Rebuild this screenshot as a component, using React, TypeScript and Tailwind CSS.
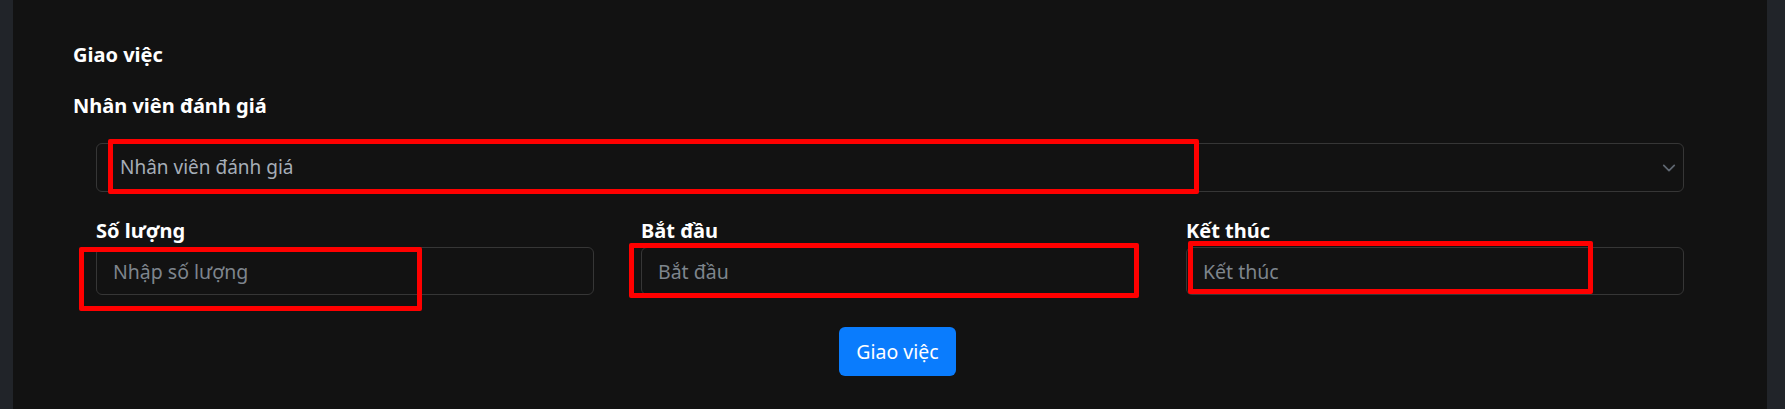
import React from "react";

const font = { fontFamily: '"Noto Sans", "Open Sans", sans-serif' };

function Field({ label, placeholder }: { label: string; placeholder: string }) {
  return (
    <div className="flex flex-col">
      <label className="text-[20px] font-bold leading-[29px] text-white">{label}</label>
      <input
        placeholder={placeholder}
        className="mt-[2px] h-[48px] w-full rounded-[6px] border border-[#363636] bg-[#121212] pl-[16px] text-[19.5px] leading-[29px] text-white outline-none placeholder:text-[#7e858d]"
      />
    </div>
  );
}

export default function App() {
  return (
    <div className="relative flex h-[409px] overflow-hidden bg-[#212429] pl-[13px] pr-[18px]" style={font}>
      <div className="flex-1 bg-[#121212] px-[60px] pt-[40px]">
        <h5 className="text-[20px] font-bold leading-[29px] text-white">Giao việc</h5>
        <div className="mt-[22px] text-[20px] font-bold leading-[29px] text-white">Nhân viên đánh giá</div>

        <div className="mx-[23px]">
          {/* select */}
          <div className="mt-[23px] flex h-[49px] items-center justify-between rounded-[6px] border border-[#363636] pl-[23px] pr-[7px]">
            <span className="text-[19px] leading-[29px] text-[#a6aeb8]">Nhân viên đánh giá</span>
            <svg width="14" height="14" viewBox="0 0 16 16" fill="none">
              <path d="m2 5 6 6 6-6" stroke="#5f6771" strokeWidth="2" strokeLinecap="round" strokeLinejoin="round" />
            </svg>
          </div>

          <div className="mt-[24px] grid grid-cols-3 gap-x-[47px]">
            <Field label="Số lượng" placeholder="Nhập số lượng" />
            <Field label="Bắt đầu" placeholder="Bắt đầu" />
            <Field label="Kết thúc" placeholder="Kết thúc" />
          </div>

          <div className="mt-[32px] flex justify-center pl-[15px]">
            <button className="h-[49px] w-[117px] rounded-[6px] bg-[#0a7cfd] text-[19.5px] leading-[29px] text-white">
              Giao việc
            </button>
          </div>
        </div>
      </div>

      {/* red annotation boxes */}
      <div className="pointer-events-none absolute left-[108px] top-[139px] h-[55px] w-[1091px] rounded-[2px] border-[5px] border-[#ff0000]" />
      <div className="pointer-events-none absolute left-[79px] top-[247px] h-[64px] w-[343px] rounded-[2px] border-[5px] border-[#ff0000]" />
      <div className="pointer-events-none absolute left-[629px] top-[243px] h-[55px] w-[510px] rounded-[2px] border-[5px] border-[#ff0000]" />
      <div className="pointer-events-none absolute left-[1188px] top-[241px] h-[53px] w-[405px] rounded-[2px] border-[5px] border-[#ff0000]" />
    </div>
  );
}
